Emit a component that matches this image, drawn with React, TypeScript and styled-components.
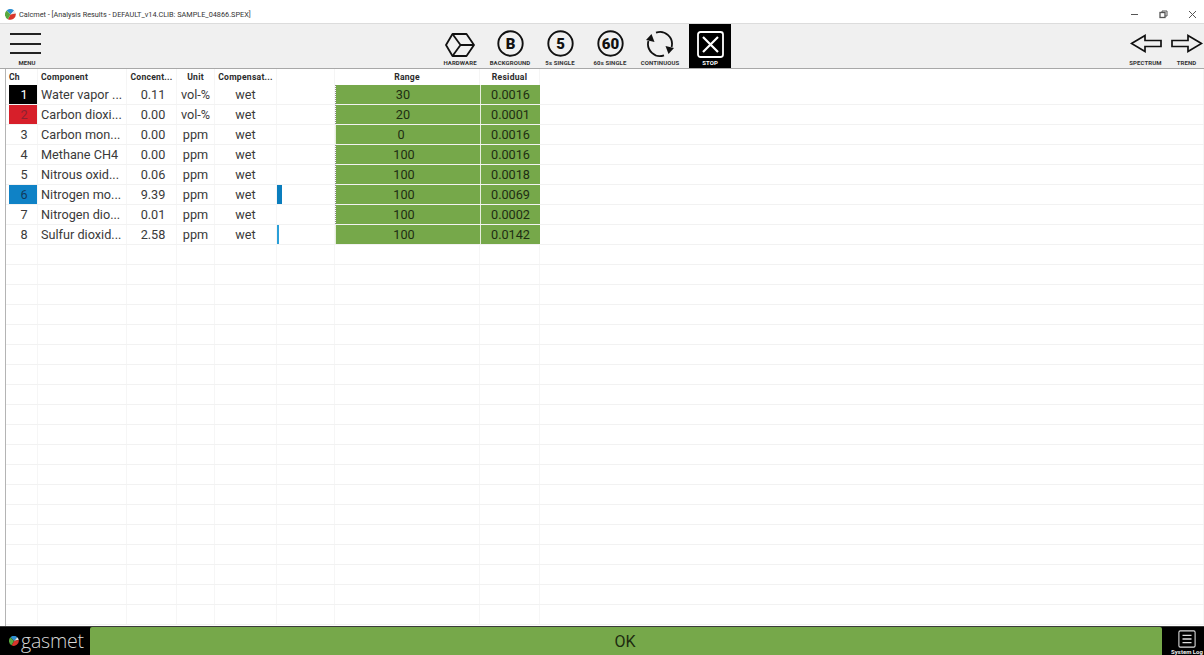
import React from "react";
import styled, { createGlobalStyle } from "styled-components";

const Global = createGlobalStyle`
  html, body { margin: 0; padding: 0; background: #fff; }
  * { box-sizing: border-box; }
`;

const Shell = styled.div`
  width: 1204px;
  height: 655px;
  display: flex;
  flex-direction: column;
  overflow: hidden;
  background: #fff;
  font-family: Roboto, "Liberation Sans", sans-serif;
`;

const TitleBar = styled.div`
  height: 23px;
  flex: none;
  display: flex;
  align-items: center;
  padding: 5px 0 0 5px;
  gap: 3px;
  font: 7.3px Roboto, "Liberation Sans", sans-serif;
  color: #333;
`;

const WindowControls = styled.div`
  margin-left: auto;
  display: flex;
  align-items: center;
  padding-right: 7px;
  gap: 20px;
  color: #555;
`;

const Toolbar = styled.div`
  height: 46px;
  flex: none;
  display: flex;
  background: #f0f0f0;
  border-top: 1px solid #dcdcdc;
  border-bottom: 1px solid #a8a8a8;
`;

const MenuButton = styled.div`
  width: 46px;
  flex: none;
  display: flex;
  flex-direction: column;
  align-items: center;
  padding: 9px 0 2px 5px;
`;

const BurgerLines = styled.div`
  width: 31px;
  height: 21px;
  flex: none;
  display: flex;
  flex-direction: column;
  justify-content: space-between;
  i {
    display: block;
    height: 2px;
    background: #222;
  }
`;

const MenuCaption = styled.div`
  margin-top: auto;
  display: flex;
  padding-left: 3px;
`;

const ActionGroup = styled.div`
  display: flex;
  margin-left: 389px;
`;

const ToolButton = styled.div<{ $dark?: boolean }>`
  width: 50px;
  height: 44px;
  display: flex;
  flex-direction: column;
  align-items: center;
  justify-content: flex-end;
  gap: 2px;
  padding-bottom: 2px;
  color: ${(p) => (p.$dark ? "#fff" : "#111")};
  svg { display: block; }
`;

const StopFace = styled.div`
  width: 42px;
  height: 44px;
  margin-bottom: -2px;
  background: #000;
  display: flex;
  flex-direction: column;
  align-items: center;
  justify-content: flex-end;
  gap: 1px;
  padding-bottom: 2px;
`;

const Label = styled.span<{ $light?: boolean }>`
  font: 700 6px/7px Roboto, "Liberation Sans", sans-serif;
  letter-spacing: 0.1px;
  white-space: nowrap;
  color: ${(p) => (p.$light ? "#fff" : "#333")};
`;

const NavGroup = styled.div`
  margin-left: auto;
  display: flex;
  gap: 6px;
`;

const NavButton = styled.div`
  width: 35px;
  display: flex;
  flex-direction: column;
  align-items: center;
  justify-content: flex-end;
  gap: 6px;
  padding-bottom: 2px;
`;

const Sheet = styled.div`
  flex: 1;
  min-height: 0;
  margin-left: 5px;
  border-left: 1px solid #b4b4b4;
  overflow: hidden;
`;

const columns = "32px 89px 50px 38px 62px 58px 145px 60px 1fr";

const HeaderRow = styled.div`
  display: grid;
  grid-template-columns: ${columns};
  height: 16px;
`;

const HeaderCell = styled.div<{ $left?: boolean }>`
  font: 700 8.6px/17px Roboto, "Liberation Sans", sans-serif;
  letter-spacing: 0.25px;
  color: #2b2b2b;
  text-align: ${(p) => (p.$left ? "left" : "center")};
  padding-left: ${(p) => (p.$left ? "3px" : "0")};
  border-right: 1px solid #f5f5f5;
  white-space: nowrap;
`;

const Row = styled.div`
  display: grid;
  grid-template-columns: ${columns};
  grid-template-rows: 19px;
  height: 20px;
  border-bottom: 1px solid #f2f2f2;
`;

const Cell = styled.div<{ $left?: boolean; $pad?: number }>`
  font: 400 12.7px/20px Roboto, "Liberation Sans", sans-serif;
  color: #3a3a3a;
  text-align: ${(p) => (p.$left ? "left" : "center")};
  padding-left: ${(p) => (p.$left ? 3 : p.$pad ?? 0)}px;
  border-right: 1px solid #f6f6f6;
  white-space: nowrap;
  overflow: hidden;
`;

const ChannelCell = styled.div<{ $bg?: string; $fg?: string }>`
  font: 400 12.7px/20px Roboto, "Liberation Sans", sans-serif;
  text-align: center;
  padding-left: 2px;
  margin-left: 3px;
  background: ${(p) => p.$bg ?? "transparent"};
  color: ${(p) => p.$fg ?? "#3a3a3a"};
  border-right: 1px solid #f6f6f6;
`;

const BarCell = styled.div`
  border-right: 1px solid #f6f6f6;
  display: flex;
`;

const Bar = styled.div<{ $tone: string; $size: number }>`
  width: ${(p) => p.$size}px;
  background: ${(p) => p.$tone};
`;

const StatusCell = styled.div<{ $edge?: boolean; $nudge?: number }>`
  font: 400 12.7px/20px Roboto, "Liberation Sans", sans-serif;
  color: #1e2e12;
  text-align: center;
  background: #76a84a;
  background-clip: padding-box;
  padding-right: ${(p) => p.$nudge ?? 0}px;
  border-left: ${(p) => (p.$edge ? "1px dotted #8a8a8a" : "1px solid #e6eedc")};
`;

const BlankCell = styled.div`
  border-right: 1px solid #f6f6f6;
`;

const Footer = styled.div`
  height: 29px;
  flex: none;
  background: #000;
  border-top: 1px solid #3a3a3a;
  display: flex;
  align-items: stretch;
`;

const Brand = styled.div`
  width: 90px;
  flex: none;
  display: flex;
  align-items: center;
  gap: 2px;
  padding-left: 9px;
  color: #d8d8d8;
  font: 300 19.5px/26px "Open Sans", "Liberation Sans", sans-serif;
  letter-spacing: -0.2px;
`;

const StatusBanner = styled.div`
  flex: 1;
  background: #76a84a;
  border-radius: 2px 2px 0 0;
  color: #1d2b10;
  font: 400 16px/30px Roboto, "Liberation Sans", sans-serif;
  text-align: center;
  padding-right: 2px;
`;

const LogButton = styled.div`
  width: 42px;
  flex: none;
  display: flex;
  flex-direction: column;
  align-items: center;
  padding: 3px 0 0 8px;
  overflow: hidden;
`;

const LogLabel = styled.span`
  font: 700 6px/7px Roboto, "Liberation Sans", sans-serif;
  color: #eee;
  white-space: nowrap;
`;

const Swirl = ({ size }: { size: number }) => (
  <svg width={size} height={size} viewBox="0 0 20 20">
    <path d="M10 10 L3 2.5 A10 10 0 0 1 16.5 2.5 Z" fill="#2f8fd0" />
    <path d="M10 10 L16.5 2.5 A10 10 0 0 1 19.5 8 Z" fill="#e8e8e8" />
    <path d="M10 10 L19.5 8 A10 10 0 0 1 5 18.5 Z" fill="#d9342b" />
    <path d="M10 10 L5 18.5 A10 10 0 0 1 3 2.5 Z" fill="#58a83f" />
  </svg>
);

const Hardware = () => (
  <svg width="30" height="24" viewBox="0 0 30 24" fill="none" stroke="#111" strokeWidth="1.8" strokeLinejoin="round">
    <path d="M7.5 1 H21.5 L29 12 L21.5 23 H7.5 L1 12 Z" />
    <path d="M7.5 1 L15.5 12 H29 M15.5 12 L7.5 23" />
  </svg>
);

const Ring = ({ text, size }: { text: string; size: number }) => (
  <svg width="27" height="27" viewBox="0 0 27 27" fill="none">
    <circle cx="13.5" cy="13.5" r="12.2" stroke="#111" strokeWidth="1.9" />
    <text
      x="13.5"
      y={13.5 + size * 0.36}
      textAnchor="middle"
      fontFamily="Roboto, 'Liberation Sans', sans-serif"
      fontWeight="900"
      fontSize={size}
      fill="#111"
    >
      {text}
    </text>
  </svg>
);

const Continuous = () => (
  <svg width="28" height="26" viewBox="0 0 28 26" fill="none" stroke="#111" strokeWidth="1.8">
    <path d="M10 1.7 A12 12 0 0 1 25.6 16" />
    <path d="M18 24.3 A12 12 0 0 1 2.4 10" />
    <path d="M19.5 15 L28 17 L22.5 23 Z" fill="#111" stroke="none" />
    <path d="M8.5 11 L0 9 L5.5 3 Z" fill="#111" stroke="none" />
  </svg>
);

const StopGlyph = () => (
  <svg width="27" height="27" viewBox="0 0 27 27" fill="none" stroke="#fff">
    <rect x="1" y="1" width="25" height="25" rx="2.5" strokeWidth="1.8" />
    <path d="M6 6 L21 21 M21 6 L6 21" strokeWidth="2.2" />
  </svg>
);

const ArrowLeft = () => (
  <svg width="32" height="19" viewBox="0 0 32 19" fill="none" stroke="#111" strokeWidth="1.7" strokeLinejoin="miter">
    <path d="M1.5 9.5 L15 1.5 V6.5 H31 V12.5 H15 V17.5 Z" />
  </svg>
);

const ArrowRight = () => (
  <svg width="32" height="19" viewBox="0 0 32 19" fill="none" stroke="#111" strokeWidth="1.7" strokeLinejoin="miter">
    <path d="M30.5 9.5 L17 1.5 V6.5 H1 V12.5 H17 V17.5 Z" />
  </svg>
);

const LogGlyph = () => (
  <svg width="20" height="20" viewBox="0 0 20 20" fill="none" stroke="#ddd">
    <rect x="1" y="1" width="18" height="18" rx="1.5" strokeWidth="1.2" />
    <path d="M5 6 H15 M5 10 H15 M5 14 H15" strokeWidth="1.4" />
  </svg>
);

const WindowGlyphs = () => (
  <WindowControls>
    <svg width="8" height="8" viewBox="0 0 8 8" stroke="currentColor">
      <path d="M0 4.5 H7" />
    </svg>
    <svg width="9" height="9" viewBox="0 0 9 9" fill="none" stroke="currentColor">
      <rect x="1" y="2.5" width="5" height="5" strokeWidth="1.3" />
      <path d="M3 2.5 V1 H8 V6 H6" />
    </svg>
    <svg width="9" height="9" viewBox="0 0 9 9" stroke="currentColor">
      <path d="M1 1 L8 8 M8 1 L1 8" />
    </svg>
  </WindowControls>
);

type Measure = {
  ch: string;
  name: string;
  conc: string;
  unit: string;
  range: string;
  residual: string;
  bg?: string;
  fg?: string;
  bar?: { tone: string; size: number };
  nudge: number;
  edge: boolean;
};

const measures: Measure[] = [
  { ch: "1", name: "Water vapor ...", conc: "0.11", unit: "vol-%", range: "30", residual: "0.0016", bg: "#000", fg: "#fff", nudge: 10, edge: true },
  { ch: "2", name: "Carbon dioxi...", conc: "0.00", unit: "vol-%", range: "20", residual: "0.0001", bg: "#d71f2a", fg: "#8c2230", nudge: 10, edge: true },
  { ch: "3", name: "Carbon mon...", conc: "0.00", unit: "ppm", range: "0", residual: "0.0016", nudge: 14, edge: false },
  { ch: "4", name: "Methane CH4", conc: "0.00", unit: "ppm", range: "100", residual: "0.0016", nudge: 8, edge: true },
  { ch: "5", name: "Nitrous oxid...", conc: "0.06", unit: "ppm", range: "100", residual: "0.0018", nudge: 8, edge: true },
  { ch: "6", name: "Nitrogen mo...", conc: "9.39", unit: "ppm", range: "100", residual: "0.0069", bg: "#0f82c6", fg: "#123a5c", bar: { tone: "#0a7dbd", size: 5 }, nudge: 8, edge: true },
  { ch: "7", name: "Nitrogen dio...", conc: "0.01", unit: "ppm", range: "100", residual: "0.0002", nudge: 8, edge: true },
  { ch: "8", name: "Sulfur dioxid...", conc: "2.58", unit: "ppm", range: "100", residual: "0.0142", bar: { tone: "#2a9fd8", size: 2 }, nudge: 8, edge: false },
];

const blankRows = Array.from({ length: 19 }, (_, i) => i);
const blankColumns = Array.from({ length: 9 }, (_, i) => i);

export default function App() {
  return (
    <Shell>
      <Global />
      <TitleBar>
        <Swirl size={11} />
        <span>Calcmet - [Analysis Results - DEFAULT_v14.CLIB: SAMPLE_04866.SPEX]</span>
        <WindowGlyphs />
      </TitleBar>

      <Toolbar>
        <MenuButton>
          <BurgerLines>
            <i />
            <i />
            <i />
          </BurgerLines>
          <MenuCaption>
            <Label>MENU</Label>
          </MenuCaption>
        </MenuButton>
        <ActionGroup>
          <ToolButton>
            <Hardware />
            <Label>HARDWARE</Label>
          </ToolButton>
          <ToolButton>
            <Ring text="B" size={15} />
            <Label>BACKGROUND</Label>
          </ToolButton>
          <ToolButton>
            <Ring text="5" size={15} />
            <Label>5s SINGLE</Label>
          </ToolButton>
          <ToolButton>
            <Ring text="60" size={15} />
            <Label>60s SINGLE</Label>
          </ToolButton>
          <ToolButton>
            <Continuous />
            <Label>CONTINUOUS</Label>
          </ToolButton>
          <ToolButton $dark>
            <StopFace>
              <StopGlyph />
              <Label $light>STOP</Label>
            </StopFace>
          </ToolButton>
        </ActionGroup>
        <NavGroup>
          <NavButton>
            <ArrowLeft />
            <Label>SPECTRUM</Label>
          </NavButton>
          <NavButton>
            <ArrowRight />
            <Label>TREND</Label>
          </NavButton>
        </NavGroup>
      </Toolbar>

      <Sheet>
        <HeaderRow>
          <HeaderCell $left>Ch</HeaderCell>
          <HeaderCell $left>Component</HeaderCell>
          <HeaderCell>Concent...</HeaderCell>
          <HeaderCell>Unit</HeaderCell>
          <HeaderCell>Compensat...</HeaderCell>
          <HeaderCell />
          <HeaderCell>Range</HeaderCell>
          <HeaderCell>Residual</HeaderCell>
          <HeaderCell />
        </HeaderRow>
        {measures.map((m) => (
          <Row key={m.ch}>
            <ChannelCell $bg={m.bg} $fg={m.fg}>
              {m.ch}
            </ChannelCell>
            <Cell $left>{m.name}</Cell>
            <Cell $pad={3}>{m.conc}</Cell>
            <Cell>{m.unit}</Cell>
            <Cell>wet</Cell>
            <BarCell>{m.bar && <Bar $tone={m.bar.tone} $size={m.bar.size} />}</BarCell>
            <StatusCell $edge={m.edge} $nudge={m.nudge}>
              {m.range}
            </StatusCell>
            <StatusCell>{m.residual}</StatusCell>
            <Cell />
          </Row>
        ))}
        {blankRows.map((r) => (
          <Row key={r}>
            {blankColumns.map((c) => (
              <BlankCell key={c} />
            ))}
          </Row>
        ))}
      </Sheet>

      <Footer>
        <Brand>
          <Swirl size={10} />
          <span>gasmet</span>
        </Brand>
        <StatusBanner>OK</StatusBanner>
        <LogButton>
          <LogGlyph />
          <LogLabel>System Log</LogLabel>
        </LogButton>
      </Footer>
    </Shell>
  );
}
